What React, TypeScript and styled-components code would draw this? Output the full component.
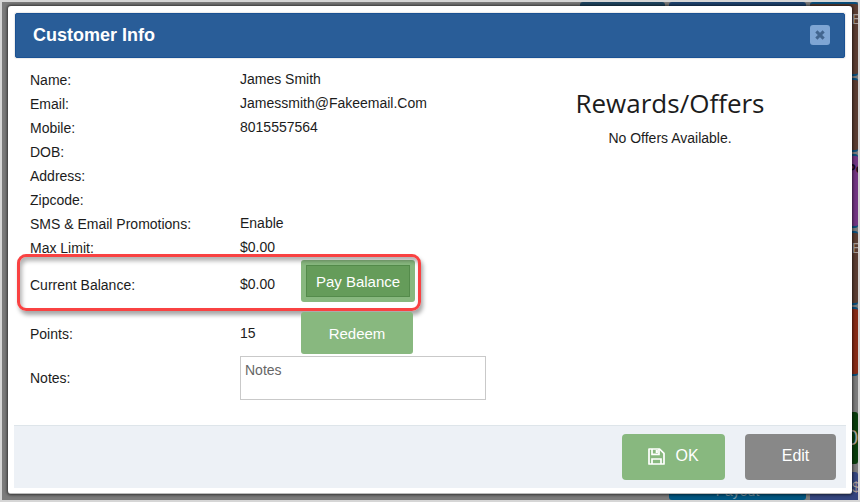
import React from "react";
import styled, { createGlobalStyle, css } from "styled-components";

const GlobalStyle = createGlobalStyle`
  *, *::before, *::after { box-sizing: border-box; }
  body {
    margin: 0;
    font-family: "Liberation Sans", Arial, sans-serif;
    font-size: 14px;
    color: #1c1c1c;
  }
`;

const Page = styled.div`
  position: relative;
  display: flex;
  min-height: 100vh;
  padding: 4px 6px 6px;
  border: 2px solid #d6d6d6;
  background: #7b7b7b;
`;

const Board = styled.div`
  position: absolute;
  inset: 0;
  display: flex;
  justify-content: flex-end;
  gap: 4px;
  overflow: hidden;
`;

const BoardColumn = styled.div<{ $width: number; $spread?: boolean }>`
  flex: none;
  display: flex;
  flex-direction: column;
  justify-content: ${(p) => (p.$spread ? "space-between" : "flex-start")};
  gap: 2px;
  width: ${(p) => p.$width}px;
`;

const Tile = styled.div<{ $bg: string; $height: number; $edge?: string; $gap?: number }>`
  flex: none;
  height: ${(p) => p.$height}px;
  margin-top: ${(p) => p.$gap ?? 0}px;
  padding: 7px 0 0 42px;
  overflow: hidden;
  white-space: nowrap;
  font-size: 14px;
  line-height: 16px;
  color: #a89d97;
  background: ${(p) => p.$bg};
  border-radius: 3px;
  ${(p) =>
    p.$edge &&
    css`
      border-top: 2px solid ${p.$edge};
      border-bottom: 2px solid ${p.$edge};
    `}
`;

const PurpleTile = styled(Tile)`
  padding: 5px 0 0 37px;
  font-size: 13px;
  font-weight: bold;
  color: #16091b;
`;

const TotalTile = styled(Tile)`
  padding: 14px 0 0 36px;
  font-size: 22px;
  line-height: 24px;
`;

const PayoutTile = styled(Tile)`
  padding: 9px 0 0;
  text-align: center;
  color: #7596a5;
`;

const Dialog = styled.section`
  position: relative;
  flex: 1;
  display: flex;
  flex-direction: column;
  min-width: 0;
  padding: 7px 6px 5px;
  background: #fff;
  border-radius: 3px;
  border-bottom: 1px solid #bcbcbc;
  box-shadow: 0 0 3px 1px rgba(0, 0, 0, 0.6);
`;

const Header = styled.header`
  display: flex;
  align-items: center;
  justify-content: space-between;
  height: 45px;
  margin: 0 1px;
  padding: 0 14px 0 17px;
  background: #295d98;
  border: 1px solid #1a5193;
  border-radius: 2px;
  box-shadow: 0 0 1px 1px #ececec;
`;

const Title = styled.h1`
  margin: 0;
  padding-bottom: 2px;
  font-size: 18px;
  line-height: 24px;
  color: #fff;
`;

const CloseButton = styled.button`
  display: flex;
  align-items: center;
  justify-content: center;
  width: 20px;
  height: 20px;
  margin-bottom: 2px;
  padding: 0;
  border: 0;
  border-radius: 3px;
  background: #7ea5d4;
`;

const Content = styled.div`
  flex: 1;
  display: flex;
  justify-content: space-between;
  padding: 10px 8px 0 16px;
`;

const Details = styled.form`
  display: flex;
  flex-direction: column;
`;

const Row = styled.div<{ $height: number }>`
  position: relative;
  display: grid;
  grid-template-columns: 210px 61px auto;
  align-items: center;
  width: fit-content;
  height: ${(p) => p.$height}px;
`;

const BalanceRow = styled(Row)`
  margin-bottom: 2px;
`;

const Highlight = styled.div`
  position: absolute;
  inset: -6px -6px -1px -13px;
  border: 3px solid #f94242;
  border-radius: 9px;
  box-shadow: 2px 4px 4px rgba(0, 0, 0, 0.35), inset 2px 4px 4px rgba(0, 0, 0, 0.3);
  pointer-events: none;
`;

const Label = styled.span`
  line-height: 20px;
  white-space: nowrap;
`;

const Value = styled.span`
  padding-bottom: 2px;
  line-height: 20px;
  white-space: nowrap;
`;

const ActionButton = styled.button<{ $active?: boolean }>`
  align-self: start;
  height: 42px;
  width: ${(p) => (p.$active ? 114 : 112)}px;
  padding: 0;
  border: 5px solid #88b87f;
  border-radius: 3px;
  background: ${(p) => (p.$active ? "#659c5a" : "#88b87f")};
  box-shadow: ${(p) => (p.$active ? "inset 0 0 0 1px #548b4b" : "none")};
  font-family: inherit;
  font-size: 15px;
  color: #fff;
`;

const NotesBox = styled.textarea`
  display: block;
  grid-column: 2 / -1;
  width: 246px;
  height: 44px;
  padding: 4px;
  border: 1px solid #c9c9c9;
  resize: none;
  font-family: inherit;
  font-size: 14px;
  line-height: 18px;
  &::placeholder {
    color: #666;
  }
`;

const Offers = styled.aside`
  width: 336px;
  padding-top: 17px;
  text-align: center;
`;

const OffersTitle = styled.h2`
  margin: 0;
  font-family: "Open Sans", sans-serif;
  font-size: 26px;
  font-weight: 400;
  line-height: 36px;
`;

const OffersText = styled.p`
  margin: 7px 0 0;
  line-height: 20px;
`;

const Footer = styled.footer`
  display: flex;
  justify-content: flex-end;
  gap: 20px;
  padding: 8px 10px;
  background: #edf1f6;
  border-top: 1px solid #dee5ea;
`;

const FooterButton = styled.button<{ $primary?: boolean }>`
  display: flex;
  align-items: center;
  justify-content: center;
  gap: 10px;
  width: ${(p) => (p.$primary ? 103 : 91)}px;
  height: 46px;
  padding: 0 0 2px ${(p) => (p.$primary ? 0 : 10)}px;
  border: 0;
  border-radius: 4px;
  background: ${(p) => (p.$primary ? "#88b87f" : "#888")};
  font-family: inherit;
  font-size: 16px;
  color: #fff;
`;

const details = [
  ["Name:", "James Smith"],
  ["Email:", "Jamessmith@Fakeemail.Com"],
  ["Mobile:", "8015557564"],
  ["DOB:", ""],
  ["Address:", ""],
  ["Zipcode:", ""],
  ["SMS & Email Promotions:", "Enable"],
  ["Max Limit:", "$0.00"],
];

function CloseIcon() {
  return (
    <svg width="10" height="10" viewBox="0 0 10 10" aria-hidden="true">
      <path
        d="M2.4 2.4 7.6 7.6M7.6 2.4 2.4 7.6"
        stroke="#42658f"
        strokeWidth="3"
        strokeLinecap="square"
      />
    </svg>
  );
}

function SaveIcon() {
  return (
    <svg width="17" height="17" viewBox="0 0 17 17" fill="none" stroke="#fff" strokeWidth="1.7" aria-hidden="true">
      <path d="M1 1h10.6L16 5.4V16H1z" strokeLinejoin="round" />
      <path d="M4 1v5.3h7V1M4 16v-5h9v5" />
      <path d="M8.8 2v3" strokeWidth="2.2" />
    </svg>
  );
}

export default function App() {
  return (
    <>
      <GlobalStyle />
      <Page>
        <Board aria-hidden="true">
          <BoardColumn $width={85}>
            <Tile $bg="#1f4560" $height={20} />
          </BoardColumn>
          <BoardColumn $width={137} $spread>
            <Tile $bg="#1e436f" $height={20} />
            <PayoutTile $bg="#005580" $height={26}>Payout</PayoutTile>
          </BoardColumn>
          <BoardColumn $width={48}>
            <Tile $bg="#593d32" $edge="#094f7d" $height={74}>E</Tile>
            <Tile $bg="#593d32" $edge="#094f7d" $height={74} />
            <PurpleTile $bg="#713582" $edge="#094f7d" $height={74}>Pe</PurpleTile>
            <Tile $bg="#593d32" $edge="#094f7d" $height={74} $gap={1}>E</Tile>
            <Tile $bg="#862b17" $edge="#094f7d" $height={69} />
            <TotalTile $bg="#093d0c" $height={52} $gap={34}>0</TotalTile>
            <Tile $bg="#34457e" $height={30} $gap={6}>$</Tile>
          </BoardColumn>
        </Board>
        <Dialog role="dialog" aria-labelledby="dialog-title">
          <Header>
            <Title id="dialog-title">Customer Info</Title>
            <CloseButton type="button" aria-label="Close">
              <CloseIcon />
            </CloseButton>
          </Header>
          <Content>
            <Details>
              {details.map(([label, value]) => (
                <Row key={label} $height={24}>
                  <Label>{label}</Label>
                  <Value>{value}</Value>
                </Row>
              ))}
              <BalanceRow $height={50}>
                <Label>Current Balance:</Label>
                <Value>$0.00</Value>
                <ActionButton type="button" $active>Pay Balance</ActionButton>
                <Highlight />
              </BalanceRow>
              <Row $height={44}>
                <Label>Points:</Label>
                <Value>15</Value>
                <ActionButton type="button">Redeem</ActionButton>
              </Row>
              <Row $height={44}>
                <Label as="label" htmlFor="notes">Notes:</Label>
                <NotesBox id="notes" placeholder="Notes" />
              </Row>
            </Details>
            <Offers>
              <OffersTitle>Rewards/Offers</OffersTitle>
              <OffersText>No Offers Available.</OffersText>
            </Offers>
          </Content>
          <Footer>
            <FooterButton type="button" $primary>
              <SaveIcon />
              OK
            </FooterButton>
            <FooterButton type="button">Edit</FooterButton>
          </Footer>
        </Dialog>
      </Page>
    </>
  );
}
